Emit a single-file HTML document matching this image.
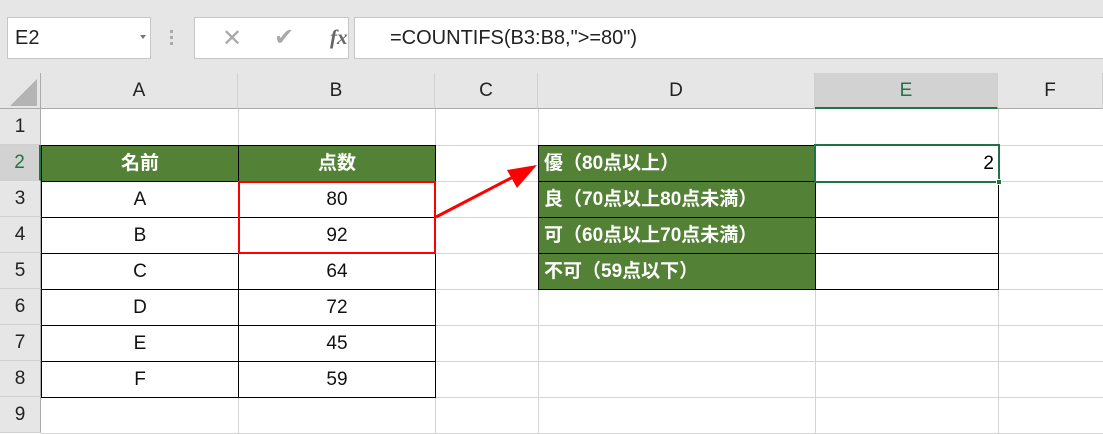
<!DOCTYPE html>
<html><head><meta charset="utf-8"><style>
body{margin:0;width:1103px;height:434px;overflow:hidden;background:#fff;font-family:"Liberation Sans","Noto Sans CJK JP",sans-serif;position:relative}
.a{position:absolute;box-sizing:border-box}
.top{left:0;top:0;width:1103px;height:73px;background:#e6e6e6}
.box{background:#fff;border:1px solid #c6c6c6}
.hdr{top:73px;height:36px;background:#e6e6e6;border-bottom:1px solid #ababab;border-right:1px solid #d0d0d0;text-align:center;line-height:36px;font-size:19px;color:#222}
.rn{left:0;width:41px;height:36px;background:#e6e6e6;border-right:1px solid #ababab;border-bottom:1px solid #d0d0d0;text-align:center;line-height:36px;font-size:19px;color:#222}
.vl{top:109px;width:1px;height:325px;background:#d4d4d4}
.hl{left:41px;width:1062px;height:1px;background:#d4d4d4}
.c{height:37px;border:1px solid #000;text-align:center;line-height:35px;font-size:19px;color:#111;background:#fff}
.g{background:#538135;color:#fff;font-weight:bold}
.d{text-align:left;padding-left:5px}
</style></head><body>
<div class="a top"></div>
<div class="a box" style="left:7px;top:17px;width:144px;height:42px;font-size:20px;line-height:40px;padding-left:7px;color:#222">E2</div>
<div class="a" style="left:140px;top:35px;width:0;height:0;border-left:3px solid transparent;border-right:3px solid transparent;border-top:4px solid #777"></div>
<div class="a" style="left:170px;top:30px;width:3px;height:18px;background:repeating-linear-gradient(#aaa 0 3px,transparent 3px 6px)"></div>
<div class="a box" style="left:194px;top:17px;width:155px;height:42px"></div>
<div class="a" style="left:222px;top:24px;font-size:24px;color:#aaa">✕</div>
<div class="a" style="left:274px;top:23px;font-size:24px;color:#aaa">✔</div>
<div class="a" style="left:330px;top:25px;font-size:21px;color:#666;font-family:'Liberation Serif',serif;font-style:italic;font-weight:bold">fx</div>
<div class="a box" style="left:354px;top:17px;width:760px;height:42px;font-size:20px;line-height:40px;padding-left:35px;color:#222">=COUNTIFS(B3:B8,"&gt;=80")</div>

<div class="a" style="left:0;top:73px;width:41px;height:36px;background:#e6e6e6;border-right:1px solid #ababab;border-bottom:1px solid #ababab"></div>
<div class="a" style="left:10px;top:79px;width:0;height:0;border-left:27px solid transparent;border-bottom:27px solid #b4b4b4"></div>
<div class="a hdr" style="left:41px;width:197px">A</div>
<div class="a hdr" style="left:238px;width:197px">B</div>
<div class="a hdr" style="left:435px;width:103px">C</div>
<div class="a hdr" style="left:538px;width:277px">D</div>
<div class="a hdr" style="left:815px;width:183px;background:#d2d2d2;border-bottom:2px solid #217346;color:#217346">E</div>
<div class="a hdr" style="left:998px;width:105px">F</div>

<div class="a rn" style="top:109px">1</div>
<div class="a rn" style="top:145px;background:#d2d2d2;color:#217346;border-right:2px solid #217346">2</div>
<div class="a rn" style="top:181px">3</div>
<div class="a rn" style="top:217px">4</div>
<div class="a rn" style="top:253px">5</div>
<div class="a rn" style="top:289px">6</div>
<div class="a rn" style="top:325px">7</div>
<div class="a rn" style="top:361px">8</div>
<div class="a rn" style="top:397px">9</div>

<div class="a vl" style="left:238px"></div><div class="a vl" style="left:435px"></div><div class="a vl" style="left:538px"></div><div class="a vl" style="left:815px"></div><div class="a vl" style="left:998px"></div>
<div class="a hl" style="top:145px"></div><div class="a hl" style="top:181px"></div><div class="a hl" style="top:217px"></div><div class="a hl" style="top:253px"></div><div class="a hl" style="top:289px"></div><div class="a hl" style="top:325px"></div><div class="a hl" style="top:361px"></div><div class="a hl" style="top:397px"></div><div class="a hl" style="top:433px"></div>

<div class="a c g" style="left:41px;top:145px;width:198px">名前</div>
<div class="a c g" style="left:238px;top:145px;width:198px">点数</div>
<div class="a c" style="left:41px;top:181px;width:198px">A</div><div class="a c" style="left:238px;top:181px;width:198px">80</div>
<div class="a c" style="left:41px;top:217px;width:198px">B</div><div class="a c" style="left:238px;top:217px;width:198px">92</div>
<div class="a c" style="left:41px;top:253px;width:198px">C</div><div class="a c" style="left:238px;top:253px;width:198px">64</div>
<div class="a c" style="left:41px;top:289px;width:198px">D</div><div class="a c" style="left:238px;top:289px;width:198px">72</div>
<div class="a c" style="left:41px;top:325px;width:198px">E</div><div class="a c" style="left:238px;top:325px;width:198px">45</div>
<div class="a c" style="left:41px;top:361px;width:198px">F</div><div class="a c" style="left:238px;top:361px;width:198px">59</div>

<div class="a c g d" style="left:538px;top:145px;width:278px">優（80点以上）</div>
<div class="a c g d" style="left:538px;top:181px;width:278px">良（70点以上80点未満）</div>
<div class="a c g d" style="left:538px;top:217px;width:278px">可（60点以上70点未満）</div>
<div class="a c g d" style="left:538px;top:253px;width:278px">不可（59点以下）</div>
<div class="a c" style="left:815px;top:145px;width:184px"></div>
<div class="a c" style="left:815px;top:181px;width:184px"></div>
<div class="a c" style="left:815px;top:217px;width:184px"></div>
<div class="a c" style="left:815px;top:253px;width:184px"></div>
<div class="a" style="left:814px;top:144px;width:186px;height:39px;border:2px solid #217346;background:#fff;text-align:right;padding-right:4px;line-height:35px;font-size:19px">2</div>
<div class="a" style="left:996px;top:179px;width:6px;height:6px;background:#217346;border:1px solid #fff"></div>

<div class="a" style="left:238px;top:181px;width:198px;height:73px;border:2px solid #f00"></div>
<svg class="a" style="left:0;top:0" width="1103" height="434"><line x1="436" y1="217" x2="515" y2="176" stroke="#f00" stroke-width="3"/><polygon points="537,165 507,170 517,188" fill="#f00"/></svg>
</body></html>
